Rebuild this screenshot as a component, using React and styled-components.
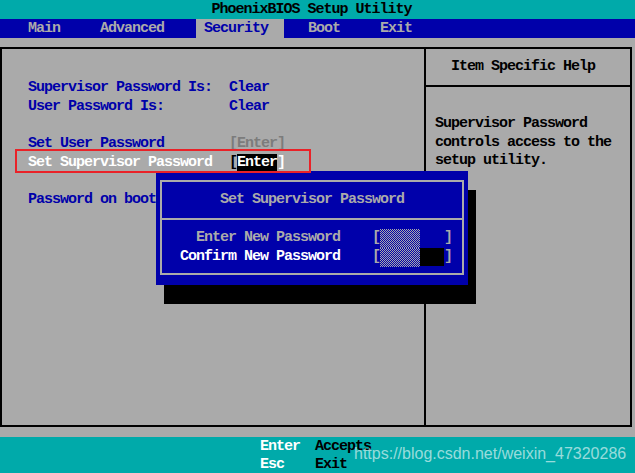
import styled, { createGlobalStyle } from "styled-components";

const GlobalStyle = createGlobalStyle`
  html, body {
    margin: 0;
    padding: 0;
    background: #aaaaaa;
  }
  body {
    font-family: "Liberation Mono", "DejaVu Sans Mono", monospace;
  }
`;

const BLUE = "#0000aa";
const GRAY = "#aaaaaa";
const TEAL = "#00aaaa";
const ROW = "18.67px";

const Screen = styled.div`
  position: relative;
  width: 635px;
  height: 473px;
  overflow: hidden;
  background: ${GRAY};
  font-size: 15px;
  font-weight: bold;
  letter-spacing: -1px;
  line-height: ${ROW};
  display: flex;
  flex-direction: column;
`;

const TitleBar = styled.div`
  height: 19px;
  line-height: 19px;
  background: ${TEAL};
  color: #000;
  text-align: center;
  padding-right: 12px;
`;

const MenuBar = styled.div`
  height: 19px;
  line-height: 19px;
  background: ${BLUE};
  display: flex;
  gap: 16px;
  padding-left: 20px;
`;

const MenuItem = styled.div`
  padding: 0 16px 0 8px;
  color: ${(p) => (p.$active ? BLUE : GRAY)};
  background: ${(p) => (p.$active ? GRAY : "transparent")};
`;

const Panel = styled.div`
  margin-top: 9px;
  width: 632px;
  height: 380px;
  box-sizing: border-box;
  border: 2px solid #000;
  display: grid;
  grid-template-columns: 422px 1fr;
`;

const ItemList = styled.div`
  padding: 30px 0 0 26px;
  display: flex;
  flex-direction: column;
`;

const Row = styled.div`
  display: flex;
  height: ${ROW};
  white-space: pre;
`;

const Label = styled.span`
  width: 200px;
  color: ${(p) => (p.$selected ? "#ffffff" : BLUE)};
`;

const Value = styled.span`
  margin-left: 1px;
  color: ${(p) => (p.$muted ? "#7c7c7c" : BLUE)};
`;

const Bracket = styled.span`
  color: ${(p) => p.$color};
`;

const Highlight = styled.span`
  background: #000;
  color: #fff;
`;

const HelpColumn = styled.div`
  border-left: 2px solid #000;
  display: flex;
  flex-direction: column;
  color: #000;
`;

const HelpHeader = styled.div`
  height: 36px;
  border-bottom: 2px solid #000;
  display: flex;
  align-items: center;
  padding-left: 25px;
`;

const HelpBody = styled.div`
  padding: 28px 0 0 9px;
`;

const Footer = styled.div`
  margin-top: 10px;
  height: 36px;
  box-sizing: border-box;
  background: ${TEAL};
  padding: 1px 0 0 260px;
  display: grid;
  grid-template-columns: 55px auto;
  grid-auto-rows: 18.3px;
  align-content: start;
`;

const Key = styled.span`
  color: #fff;
`;

const KeyDesc = styled.span`
  color: #000;
`;

const Dialog = styled.div`
  position: absolute;
  left: 156px;
  top: 171px;
  width: 312px;
  height: 114px;
  box-sizing: border-box;
  padding: 9px 4px 10px;
  background: ${BLUE};
  box-shadow: 8px 19px 0 #000;
  z-index: 2;
`;

const DialogFrame = styled.div`
  height: 100%;
  box-sizing: border-box;
  border: 2px solid ${GRAY};
  display: flex;
  flex-direction: column;
`;

const DialogTitle = styled.div`
  height: 36px;
  border-bottom: 2px solid ${GRAY};
  display: flex;
  align-items: center;
  justify-content: center;
  color: ${GRAY};
`;

const DialogBody = styled.div`
  padding-top: 9px;
  display: flex;
  flex-direction: column;
`;

const DialogRow = styled.div`
  display: flex;
  align-items: stretch;
  height: ${ROW};
  white-space: pre;
`;

const DialogLabel = styled.span`
  width: 178px;
  text-align: right;
  color: ${(p) => (p.$active ? "#ffffff" : GRAY)};
`;

const FieldBracket = styled.span`
  width: 8px;
  text-align: center;
  color: ${GRAY};
  margin-left: ${(p) => p.$gap || 0}px;
`;

const Field = styled.span`
  width: 64px;
  display: flex;
`;

const Cursor = styled.span`
  width: 24px;
  background: ${(p) => (p.$on ? "#000" : "transparent")};
`;

const Annotation = styled.div`
  position: absolute;
  left: 15px;
  top: 149px;
  width: 296px;
  height: 24px;
  box-sizing: border-box;
  border: 2px solid #ea2228;
  z-index: 3;
`;

const Watermark = styled.div`
  position: absolute;
  left: 354px;
  top: 446px;
  font-family: "Liberation Sans", Arial, sans-serif;
  font-size: 16px;
  font-weight: normal;
  line-height: 16px;
  letter-spacing: 0;
  color: rgba(255, 255, 255, 0.6);
  z-index: 3;
`;

// the masked password characters: a 1px blue / gray checkerboard
function Dither({ id }) {
  return (
    <svg width="40" height="19" shapeRendering="crispEdges" style={{ display: "block" }}>
      <defs>
        <pattern id={id} width="2" height="2" patternUnits="userSpaceOnUse">
          <rect width="2" height="2" fill={BLUE} />
          <rect width="1" height="1" fill={GRAY} />
          <rect x="1" y="1" width="1" height="1" fill={GRAY} />
        </pattern>
      </defs>
      <rect width="40" height="19" fill={`url(#${id})`} />
    </svg>
  );
}

const menu = ["Main", "Advanced", "Security", "Boot", "Exit"];

export default function App() {
  return (
    <Screen>
      <GlobalStyle />
      <TitleBar>PhoenixBIOS Setup Utility</TitleBar>
      <MenuBar>
        {menu.map((m) => (
          <MenuItem key={m} $active={m === "Security"}>
            {m}
          </MenuItem>
        ))}
      </MenuBar>

      <Panel>
        <ItemList>
          <Row>
            <Label>Supervisor Password Is:</Label>
            <Value>Clear</Value>
          </Row>
          <Row>
            <Label>User Password Is:</Label>
            <Value>Clear</Value>
          </Row>
          <Row />
          <Row>
            <Label>Set User Password</Label>
            <Value $muted>[Enter]</Value>
          </Row>
          <Row>
            <Label $selected>Set Supervisor Password</Label>
            <Value>
              <Bracket $color="#000">[</Bracket>
              <Highlight>Enter</Highlight>
              <Bracket $color="#fff">]</Bracket>
            </Value>
          </Row>
          <Row />
          <Row>
            <Label>Password on boot</Label>
          </Row>
        </ItemList>

        <HelpColumn>
          <HelpHeader>Item Specific Help</HelpHeader>
          <HelpBody>
            Supervisor Password
            <br />
            controls access to the
            <br />
            setup utility.
          </HelpBody>
        </HelpColumn>
      </Panel>

      <Footer>
        <Key>Enter</Key>
        <KeyDesc>Accepts</KeyDesc>
        <Key>Esc</Key>
        <KeyDesc>Exit</KeyDesc>
      </Footer>

      <Dialog>
        <DialogFrame>
          <DialogTitle>Set Supervisor Password</DialogTitle>
          <DialogBody>
            <DialogRow>
              <DialogLabel>Enter New Password</DialogLabel>
              <FieldBracket $gap={32}>[</FieldBracket>
              <Field>
                <Dither id="dither-new" />
                <Cursor />
              </Field>
              <FieldBracket>]</FieldBracket>
            </DialogRow>
            <DialogRow>
              <DialogLabel $active>Confirm New Password</DialogLabel>
              <FieldBracket $gap={32}>[</FieldBracket>
              <Field>
                <Dither id="dither-confirm" />
                <Cursor $on />
              </Field>
              <FieldBracket>]</FieldBracket>
            </DialogRow>
          </DialogBody>
        </DialogFrame>
      </Dialog>

      <Annotation />
      <Watermark>https://blog.csdn.net/weixin_47320286</Watermark>
    </Screen>
  );
}
